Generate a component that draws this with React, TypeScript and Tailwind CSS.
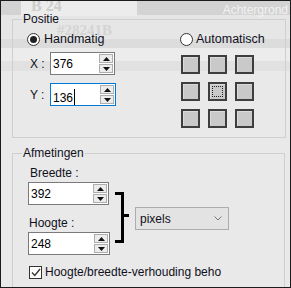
import React from 'react';

const font = { fontFamily: '"Liberation Sans", Arial, sans-serif' };

function Spin({ value, focused, width }: { value: string; focused?: boolean; width: string }) {
  return (
    <div
      className={[
        'flex h-[23px] items-center border bg-white pl-[2px] pr-[1px]',
        width,
        focused ? 'border-[#0078d7]' : 'border-[#7a7a7a]',
      ].join(' ')}
    >
      <span className="flex-1 text-[12px] leading-none text-black">
        {value}
        {focused && <span className="ml-[1px] inline-block h-[16px] w-px translate-y-[3px] bg-black align-baseline" />}
      </span>
      <div className="flex flex-col gap-px">
        <SpinBtn up />
        <SpinBtn />
      </div>
    </div>
  );
}

function SpinBtn({ up }: { up?: boolean }) {
  return (
    <div className="flex h-[9px] w-[14px] items-center justify-center border border-[#adadad] bg-[#ececec]">
      <svg width="7" height="4" viewBox="0 0 7 4">
        {up ? <path d="M0 4 L3.5 0 L7 4 Z" fill="#111" /> : <path d="M0 0 L3.5 4 L7 0 Z" fill="#111" />}
      </svg>
    </div>
  );
}

function Cell({ focus }: { focus?: boolean }) {
  return (
    <div className="flex h-[19px] w-[19px] items-center justify-center border-2 border-[#3e3e3e] bg-[#c9c9c9] shadow-[inset_1px_1px_0_#dadada]">
      {focus && <div className="h-[11px] w-[11px] border border-dotted border-[#222]" />}
    </div>
  );
}

export default function App() {
  return (
    <div
      style={font}
      className="relative h-[288px] w-[291px] overflow-hidden border border-[#1c1c1c] text-[12px] text-[#10101c] bg-[linear-gradient(180deg,#d3d3d3_0px,#d3d3d3_14px,#e6e6e6_14px,#e6e6e6_38px,#dcdcdc_38px,#dcdcdc_47px,#ececec_47px,#ececec_60px,#e1e1e1_60px,#e1e1e1_70px,#e9e9e9_70px,#e9e9e9_100%)]"
    >
      {/* faded window behind the dialog */}
      <div className="absolute left-[20px] top-0 h-[15px] w-[116px] bg-[#ececec]" />
      <div className="absolute left-[30px] top-[-7px] font-['Liberation_Serif',serif] text-[16px] font-bold text-[#cdcdcd]">B 24</div>
      <div className="absolute left-[56px] top-[18px] font-['Liberation_Serif',serif] text-[15px] font-bold text-[#d4d4d4]">#28241B</div>
      <div className="absolute right-[2px] top-0 text-[12px] text-[#f2f2f2]">Achtergrond</div>

      <fieldset className="relative ml-[11px] mt-[10px] h-[127px] w-[274px] border border-[#cfcfcf]">
        <legend className="ml-[9px] px-[1px] leading-[16px]">Positie</legend>
        <div className="flex">
          <div className="w-[167px] pl-[14px]">
            <div className="mt-[6px] flex h-[13px] items-center gap-[4px]">
              <span className="flex h-[13px] w-[13px] items-center justify-center rounded-full border border-[#333] bg-white">
                <span className="h-[7px] w-[7px] rounded-full bg-[#222]" />
              </span>
              <span className="text-[12.5px]">Handmatig</span>
            </div>
            <div className="mt-[6px] flex items-center pl-[3px]">
              <span className="w-[20px]">X :</span>
              <Spin value="376" width="w-[65px]" />
            </div>
            <div className="mt-[8px] flex items-center pl-[3px]">
              <span className="w-[20px]">Y :</span>
              <Spin value="136" focused width="w-[66px]" />
            </div>
          </div>
          <div>
            <div className="mt-[6px] flex h-[13px] items-center gap-[3px]">
              <span className="h-[13px] w-[13px] rounded-full border border-[#333] bg-white" />
              <span className="text-[12.5px]">Automatisch</span>
            </div>
            <div className="ml-[1px] mt-[9px] grid grid-cols-[19px_19px_19px] gap-[8px]">
              <Cell />
              <Cell />
              <Cell />
              <Cell />
              <Cell focus />
              <Cell />
              <Cell />
              <Cell />
              <Cell />
            </div>
          </div>
        </div>
      </fieldset>

      <fieldset className="relative ml-[11px] mt-[7px] h-[170px] w-[273px] border border-[#cfcfcf]">
        <legend className="ml-[9px] px-[1px] leading-[16px]">Afmetingen</legend>
        <div className="flex items-start pl-[15px]">
          <div className="mt-[4px] flex flex-col">
            <span className="pl-[2px] leading-[16px]">Breedte :</span>
            <div className="mt-[1px]">
              <Spin value="392" width="w-[81px]" />
            </div>
            <span className="mt-[10px] pl-[1px] leading-[16px]">Hoogte :</span>
            <div className="mt-px">
              <Spin value="248" width="w-[82px]" />
            </div>
          </div>
          <svg className="mt-[29px]" width="22" height="56" viewBox="0 0 22 56">
            <path d="M5 3.5 H12.5 V51.5 H5" fill="none" stroke="#000" strokeWidth="3" />
            <path d="M12.5 25.5 H19" fill="none" stroke="#000" strokeWidth="3" />
          </svg>
          <div className="ml-[3px] mt-[46px] flex h-[23px] w-[94px] items-center justify-between border border-[#adadad] bg-[#e3e3e3] pl-[4px] pr-[6px]">
            <span>pixels</span>
            <svg width="8" height="5" viewBox="0 0 8 5">
              <path d="M0.5 0.5 L4 4 L7.5 0.5" fill="none" stroke="#777" strokeWidth="1" />
            </svg>
          </div>
        </div>
        <div className="ml-[16px] mt-[9px] flex h-[16px] w-[192px] items-center gap-[3px] overflow-hidden whitespace-nowrap">
          <span className="flex h-[13px] w-[13px] shrink-0 items-center justify-center border border-[#333] bg-white">
            <svg width="10" height="9" viewBox="0 0 10 9">
              <path d="M1 4.5 L3.8 7.5 L9 1" fill="none" stroke="#333" strokeWidth="1.3" />
            </svg>
          </span>
          <span>Hoogte/breedte-verhouding behouden</span>
        </div>
      </fieldset>
    </div>
  );
}
